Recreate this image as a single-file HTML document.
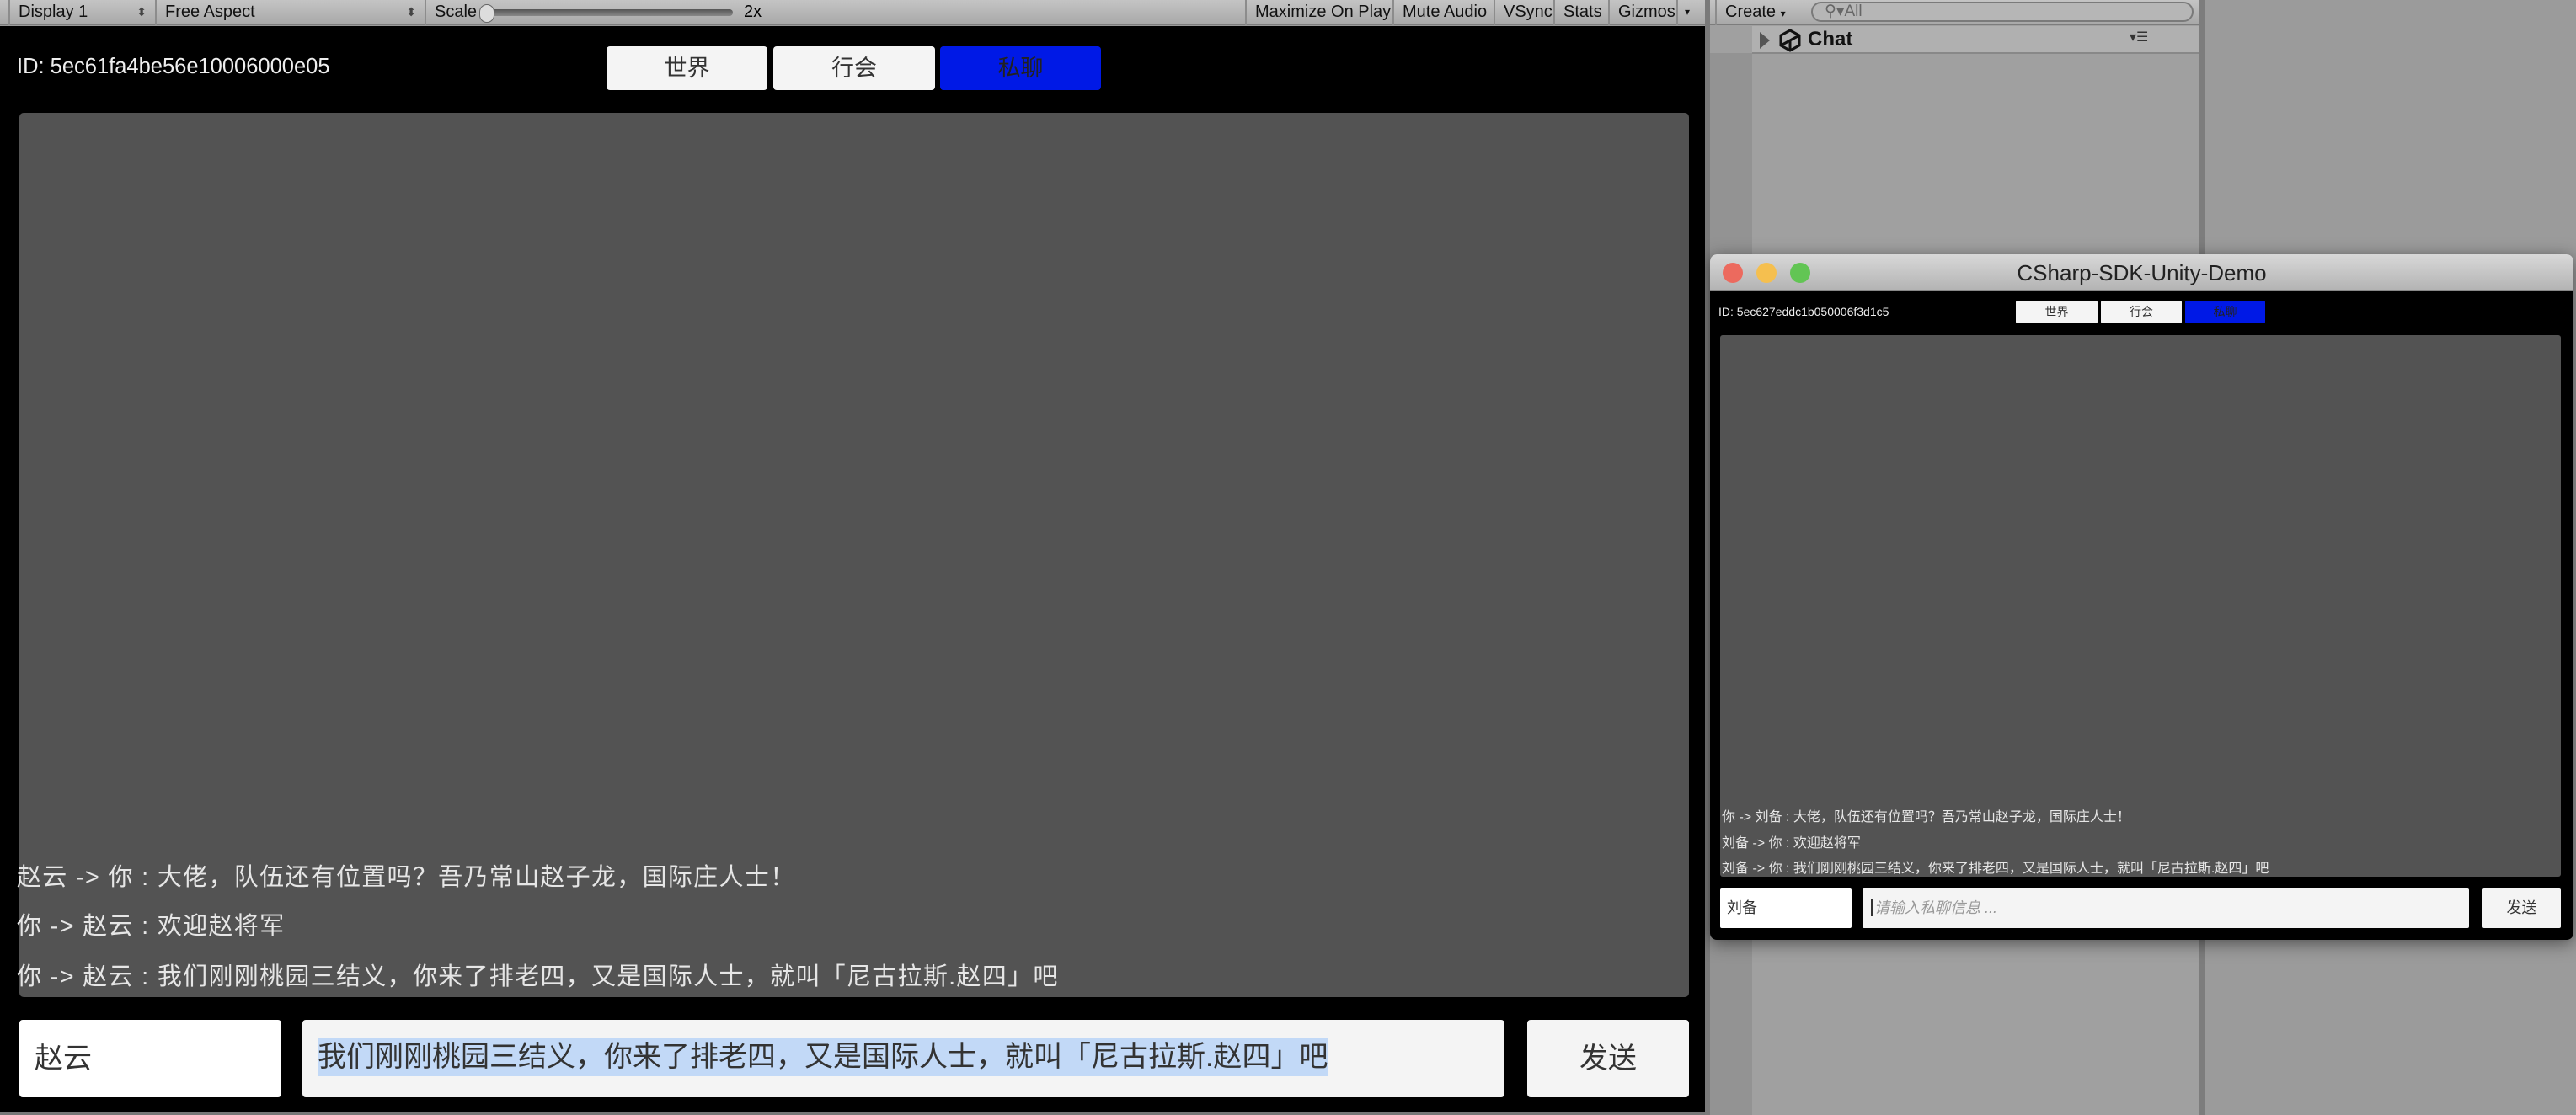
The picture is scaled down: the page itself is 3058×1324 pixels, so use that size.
<!DOCTYPE html>
<html><head><meta charset="utf-8"><style>
*{margin:0;padding:0;box-sizing:border-box}
body{width:3058px;height:1324px;position:relative;overflow:hidden;background:#9b9b9b;font-family:"Liberation Sans","Noto Sans CJK SC",sans-serif}
.a{position:absolute}
.tb{background:linear-gradient(#c4c4c4,#a9a9a9);height:30px;border-bottom:2px solid #7c7c7c}
.seg{position:absolute;top:0;height:30px;border-left:2px solid #8c8c8c;font-size:20px;line-height:28px;color:#111;padding-left:10px}
.btn{position:absolute;background:#f4f4f4;border-radius:4px;color:#333;text-align:center}
.msg{position:absolute;color:#e6e6e6;white-space:nowrap}
</style></head><body>
<div class="a tb" style="left:0;top:0;width:2024px"></div>
<div class="seg" style="left:10px;width:174px">Display 1<span class="a" style="right:10px;font-size:14px;color:#444">⬍</span></div>
<div class="seg" style="left:184px;width:320px">Free Aspect<span class="a" style="right:10px;font-size:14px;color:#444">⬍</span></div>
<div class="seg" style="left:504px;width:960px">Scale</div>
<div class="a" style="left:575px;top:11px;width:295px;height:8px;border-radius:4px;background:linear-gradient(#555,#888)"></div>
<div class="a" style="left:569px;top:5px;width:18px;height:22px;border-radius:9px;background:#ddd;border:1px solid #666"></div>
<div class="a" style="left:883px;top:0;font-size:20px;line-height:28px">2x</div>
<div class="seg" style="left:1478px">Maximize On Play</div>
<div class="seg" style="left:1653px">Mute Audio</div>
<div class="seg" style="left:1773px">VSync</div>
<div class="seg" style="left:1844px">Stats</div>
<div class="seg" style="left:1909px;width:80px">Gizmos</div>
<div class="seg" style="left:1990px;width:30px;font-size:12px;padding-left:8px">▾</div>
<div class="a" style="left:0;top:31px;width:2024px;height:1289px;background:#000"></div>
<div class="a" style="left:20px;top:65px;font-size:25.5px;color:#eee">ID: 5ec61fa4be56e10006000e05</div>
<div class="btn" style="left:720px;top:55px;width:191px;height:52px;font-size:27px;line-height:52px">世界</div>
<div class="btn" style="left:918px;top:55px;width:192px;height:52px;font-size:27px;line-height:52px">行会</div>
<div class="btn" style="left:1116px;top:55px;width:191px;height:52px;font-size:27px;line-height:52px;background:#0019e6;color:#222">私聊</div>
<div class="a" style="left:23px;top:134px;width:1982px;height:1050px;background:#535353;border-radius:5px"></div>
<div class="msg" style="left:20px;top:1018px;font-size:29px;letter-spacing:1.3px">赵云 -> 你 : 大佬，队伍还有位置吗？吾乃常山赵子龙，国际庄人士！</div>
<div class="msg" style="left:20px;top:1076px;font-size:29px;letter-spacing:1.3px">你 -> 赵云 : 欢迎赵将军</div>
<div class="msg" style="left:20px;top:1136px;font-size:29px;letter-spacing:1.3px">你 -> 赵云 : 我们刚刚桃园三结义，你来了排老四，又是国际人士，就叫「尼古拉斯.赵四」吧</div>
<div class="btn" style="left:23px;top:1211px;width:311px;height:92px;background:#fff;text-align:left;padding-left:18px;font-size:34px;line-height:92px">赵云</div>
<div class="btn" style="left:359px;top:1211px;width:1427px;height:92px"></div>
<div class="a" style="left:377px;top:1232px;width:1199px;height:46px;background:#c2d9f7"></div>
<div class="a" style="left:377px;top:1232px;font-size:34px;line-height:46px;color:#333;white-space:nowrap">我们刚刚桃园三结义，你来了排老四，又是国际人士，就叫「尼古拉斯.赵四」吧</div>
<div class="btn" style="left:1813px;top:1211px;width:192px;height:92px;font-size:34px;line-height:92px">发送</div>
<div class="a" style="left:0;top:1320px;width:2024px;height:4px;background:#777"></div>
<div class="a" style="left:2024px;top:0;width:6px;height:1324px;background:#7a7a7a"></div>
<div class="a" style="left:2030px;top:0;width:580px;height:1324px;background:#a0a0a0"></div>
<div class="a" style="left:2030px;top:63px;width:50px;height:1261px;background:#939393"></div>
<div class="a tb" style="left:2030px;top:0;width:580px"></div>
<div class="seg" style="left:2036px;width:100px">Create <span style="font-size:12px">▾</span></div>
<div class="a" style="left:2150px;top:2px;width:454px;height:24px;border-radius:12px;background:#b6b6b6;border:2px solid #7a7a7a;font-size:19px;line-height:20px;color:#666;padding-left:14px">⚲▾All</div>
<div class="a" style="left:2080px;top:31px;width:530px;height:33px;background:#b0b0b0;border-bottom:2px solid #888"></div>
<div class="a" style="left:2089px;top:38px;width:0;height:0;border-left:12px solid #555;border-top:10px solid transparent;border-bottom:10px solid transparent"></div>
<svg class="a" style="left:2112px;top:34px" width="26" height="28" viewBox="0 0 26 28"><path d="M13 2 L24 8 L24 20 L13 26 L2 20 L2 8 Z M13 14 L24 8 M13 14 L13 26 M13 14 L2 20" fill="none" stroke="#111" stroke-width="3"/></svg>
<div class="a" style="left:2146px;top:31px;font-size:24px;line-height:32px;font-weight:bold;color:#111">Chat</div>
<div class="a" style="left:2528px;top:34px;font-size:16px;color:#333">▾☰</div>
<div class="a" style="left:2610px;top:0;width:7px;height:1324px;background:#7d7d7d"></div>
<div class="a" style="left:2617px;top:0;width:441px;height:1324px;background:#9b9b9b"></div>
<div class="a" style="left:2030px;top:302px;width:1025px;height:814px;border-radius:8px;background:#000;box-shadow:0 4px 20px rgba(0,0,0,.5)"></div>
<div class="a" style="left:2030px;top:302px;width:1025px;height:43px;border-radius:8px 8px 0 0;background:linear-gradient(#d8d8d8,#b4b4b4);border-bottom:1px solid #888"></div>
<div class="a" style="left:2045px;top:312px;width:24px;height:24px;border-radius:12px;background:#ec6a5e"></div>
<div class="a" style="left:2085px;top:312px;width:24px;height:24px;border-radius:12px;background:#f5bf4f"></div>
<div class="a" style="left:2125px;top:312px;width:24px;height:24px;border-radius:12px;background:#62c554"></div>
<div class="a" style="left:2030px;top:303px;width:1025px;text-align:center;font-size:26px;line-height:43px;color:#222">CSharp-SDK-Unity-Demo</div>
<div class="a" style="left:2040px;top:362px;font-size:14px;color:#eee">ID: 5ec627eddc1b050006f3d1c5</div>
<div class="btn" style="left:2393px;top:357px;width:97px;height:27px;font-size:14px;line-height:27px;border-radius:2px">世界</div>
<div class="btn" style="left:2494px;top:357px;width:96px;height:27px;font-size:14px;line-height:27px;border-radius:2px">行会</div>
<div class="btn" style="left:2594px;top:357px;width:95px;height:27px;font-size:14px;line-height:27px;border-radius:2px;background:#0019e6;color:#222">私聊</div>
<div class="a" style="left:2042px;top:398px;width:998px;height:643px;background:#535353;border-radius:3px"></div>
<div class="msg" style="left:2044px;top:956px;font-size:16px">你 -> 刘备 : 大佬，队伍还有位置吗？吾乃常山赵子龙，国际庄人士！</div>
<div class="msg" style="left:2044px;top:987px;font-size:16px">刘备 -> 你 : 欢迎赵将军</div>
<div class="msg" style="left:2044px;top:1017px;font-size:16px">刘备 -> 你 : 我们刚刚桃园三结义，你来了排老四，又是国际人士，就叫「尼古拉斯.赵四」吧</div>
<div class="btn" style="left:2042px;top:1055px;width:156px;height:47px;background:#fff;text-align:left;padding-left:8px;font-size:18px;line-height:47px;border-radius:2px">刘备</div>
<div class="btn" style="left:2211px;top:1055px;width:720px;height:47px;text-align:left;padding-left:10px;font-size:18px;line-height:47px;color:#999;font-style:italic;border-radius:2px"><span style="border-left:2px solid #333;padding-left:2px">请输入私聊信息 ...</span></div>
<div class="btn" style="left:2947px;top:1055px;width:93px;height:47px;font-size:18px;line-height:47px;border-radius:2px">发送</div>
</body></html>
